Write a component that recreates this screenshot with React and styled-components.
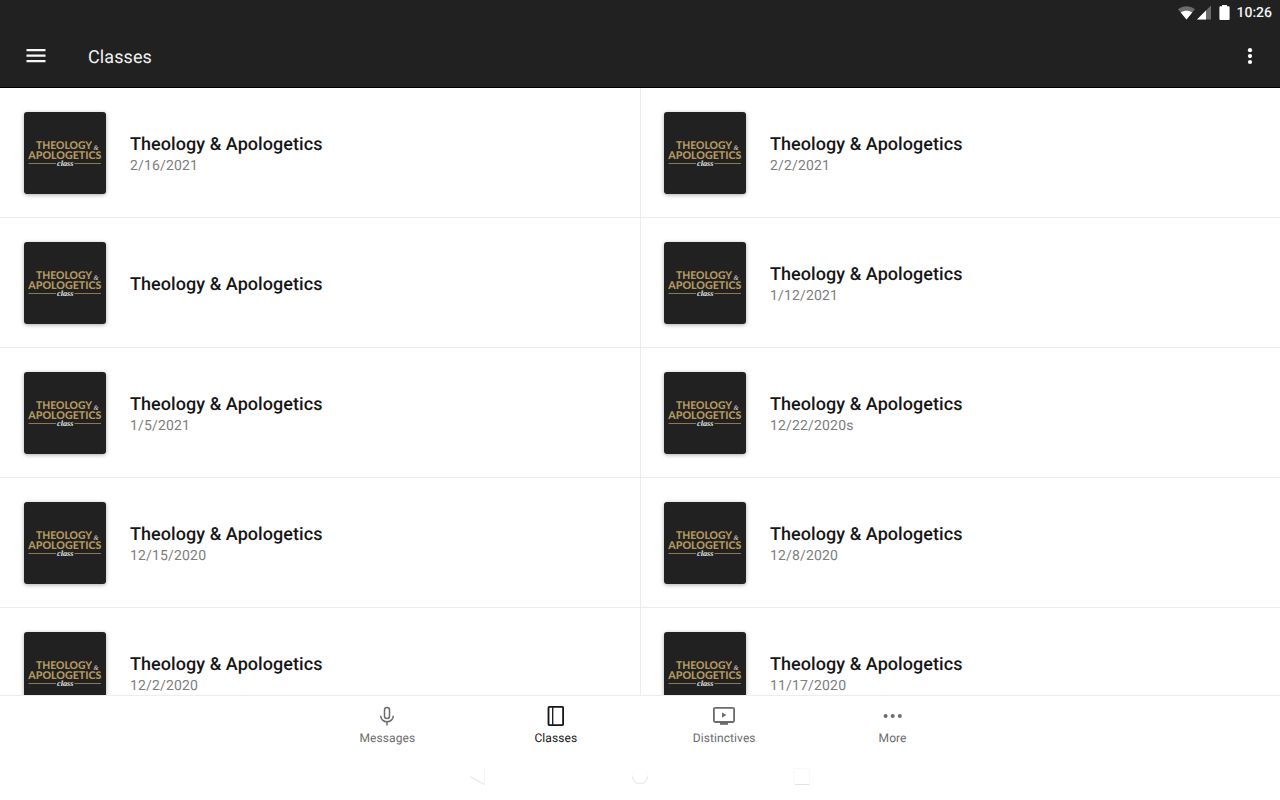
import React from "react";
import styled, { createGlobalStyle } from "styled-components";

const GlobalStyle = createGlobalStyle`
* {
  padding: 0;
  margin: 0;
  box-sizing: border-box;
}

body {
  background: #ffffff;
  color: #1c1c1c;
  font-family: Roboto, "Liberation Sans", sans-serif;
  text-rendering: geometricPrecision;
  overflow: hidden;
}
`;

const Screen = styled.div`
  display: flex;
  flex-direction: column;
  width: 1280px;
  height: 800px;
  background: #ffffff;
`;

const Header = styled.header`
  flex: none;
  height: 88px;
  background: #212121;
  border-bottom: 1px solid #000000;
`;

const StatusBar = styled.div`
  display: flex;
  justify-content: flex-end;
  align-items: center;
  height: 25px;
  padding-right: 8px;
`;

const Clock = styled.span`
  margin-left: 5px;
  padding-top: 1px;
  font-size: 14px;
  font-weight: 500;
  line-height: 16px;
  color: #f4f4f4;
`;

const Toolbar = styled.div`
  display: flex;
  align-items: center;
  height: 62px;
  padding: 0 18px 0 24px;
`;

const PageTitle = styled.h1`
  flex: 1;
  margin-left: 40px;
  padding-top: 4px;
  font-size: 18px;
  font-weight: 400;
  line-height: 24px;
  letter-spacing: 0.1px;
  color: #f2f2f2;
`;

const ClassGrid = styled.main`
  flex: none;
  display: grid;
  grid-template-columns: 640px 640px;
  grid-auto-rows: 130px;
  height: 607px;
  overflow: hidden;
`;

const StyledClassItem = styled.article`
  display: flex;
  align-items: flex-start;
  padding: 24px 24px 0;
  border-bottom: 1px solid #ececec;

  &:nth-child(even) {
    padding-left: 23px;
    border-left: 1px solid #ececec;
  }
`;

const CoverFrame = styled.div`
  flex: none;
  width: 82px;
  height: 82px;
  background: #212121;
  border-radius: 3px;
  box-shadow: 0 1px 4px rgba(0, 0, 0, 0.32);

  svg {
    display: block;
  }
`;

const ClassText = styled.div`
  display: flex;
  flex-direction: column;
  justify-content: center;
  height: 86px;
  margin-left: 24px;
`;

const ClassTitle = styled.h2`
  font-size: 18px;
  font-weight: 500;
  line-height: 22px;
  letter-spacing: 0.06px;
  white-space: nowrap;
  color: #161616;
`;

const ClassDate = styled.time`
  font-size: 14px;
  line-height: 20px;
  letter-spacing: 0.17px;
  color: #7d7d7d;
`;

const BottomNav = styled.nav`
  flex: none;
  display: flex;
  justify-content: center;
  height: 61px;
  padding-top: 8px;
  border-top: 1px solid #ededed;
`;

const StyledTab = styled.div`
  display: flex;
  flex-direction: column;
  align-items: center;
  width: 168.4px;
  color: ${(props) => (props.$active ? "#161616" : "#6c6c6c")};

  svg {
    display: block;
  }
`;

const TabLabel = styled.span`
  margin-top: 2px;
  font-size: 12px;
  line-height: 16px;
  letter-spacing: 0.08px;
`;

const SystemBar = styled.div`
  flex: none;
  display: flex;
  justify-content: center;
  gap: 138px;
  height: 44px;
  padding-top: 9px;
`;

const StatusIcons = () => (
  <svg width="54" height="18" viewBox="0 0 54 18">
    <path d="M9.5 15.5 1 5.2C6 1.2 13 1.2 18 5.2Z" fill="#6b6b6b" />
    <path d="M9.5 15.5 3.8 8.6C7 6 12 6 15.2 8.6Z" fill="#ffffff" />
    <path d="M20 15.5H34V1.5Z" fill="#6b6b6b" />
    <path d="M20 15.5H29V6.5Z" fill="#ffffff" />
    <path d="M45 1h5v1.3h1.6a1 1 0 0 1 1 1v11.7a1 1 0 0 1-1 1h-8.2a1 1 0 0 1-1-1V3.3a1 1 0 0 1 1-1H45Z" fill="#ffffff" />
  </svg>
);

const MenuIcon = () => (
  <svg width="24" height="24" viewBox="0 0 24 24">
    <path d="M2.5 6.1h19M2.5 11.6h19M2.5 17.1h19" stroke="#f7f7f7" strokeWidth="2.2" />
  </svg>
);

const OverflowIcon = () => (
  <svg width="24" height="24" viewBox="0 0 24 24" fill="#ffffff">
    <circle cx="12" cy="6.2" r="2.1" />
    <circle cx="12" cy="12.1" r="2.1" />
    <circle cx="12" cy="18" r="2.1" />
  </svg>
);

const Cover = () => (
  <CoverFrame>
    <svg width="82" height="82" viewBox="0 0 82 82">
      <g fill="#b3985f" fontFamily="Lato, sans-serif" fontWeight="900">
        <text x="12" y="37.4" fontSize="10.6" textLength="56" lengthAdjust="spacingAndGlyphs">
          THEOLOGY
        </text>
        <text x="4.3" y="47.2" fontSize="10.6" textLength="73" lengthAdjust="spacingAndGlyphs">
          APOLOGETICS
        </text>
      </g>
      <g fill="#e4e4e4" fontFamily="'Liberation Serif', serif" fontStyle="italic">
        <text x="69.4" y="37.6" fontSize="7" textLength="5" lengthAdjust="spacingAndGlyphs">
          &amp;
        </text>
        <text x="33" y="54" fontSize="8" fontWeight="700" textLength="16.5" lengthAdjust="spacingAndGlyphs">
          class
        </text>
      </g>
      <path d="M4.5 51.5H32M50.5 51.5H77" stroke="#8d784f" />
    </svg>
  </CoverFrame>
);

const MicIcon = () => (
  <svg width="24" height="24" viewBox="0 0 24 24" fill="none" stroke="currentColor" strokeWidth="1.5">
    <rect x="9.5" y="3.6" width="5" height="11" rx="2.5" />
    <path d="M5.7 11.8c0 3.5 2.8 6 6.3 6s6.3-2.5 6.3-6M12 17.8v3.7" />
  </svg>
);

const BookIcon = () => (
  <svg width="24" height="24" viewBox="0 0 24 24" fill="none" stroke="currentColor" strokeWidth="1.8">
    <rect x="4.5" y="2.9" width="14.6" height="18.2" rx="0.8" />
    <path d="M8.7 3v18" strokeWidth="1.3" />
  </svg>
);

const VideoIcon = () => (
  <svg width="24" height="24" viewBox="0 0 24 24" fill="none" stroke="currentColor">
    <rect x="1.9" y="3.9" width="20.2" height="14.1" rx="1.2" strokeWidth="1.8" />
    <path d="M8 19.8h8" strokeWidth="2" />
    <path d="M10 8.5v5.2l4.4-2.6Z" fill="currentColor" stroke="none" />
  </svg>
);

const MoreIcon = () => (
  <svg width="24" height="24" viewBox="0 0 24 24" fill="currentColor">
    <circle cx="4.6" cy="12" r="2" />
    <circle cx="11.7" cy="12" r="2" />
    <circle cx="18.8" cy="12" r="2" />
  </svg>
);

const SystemButtons = () => (
  <SystemBar>
    <svg width="24" height="24" viewBox="0 0 24 24" fill="none">
      <path d="M18.5 3v16.5" stroke="#f5f5f5" />
      <path d="M4 11.5 18.5 19.5" stroke="#e2e2e2" />
    </svg>
    <svg width="24" height="24" viewBox="0 0 24 24" fill="none">
      <circle cx="12" cy="10.5" r="7.5" stroke="#fcfcfc" />
      <path d="M4.5 12c1.3 9 13.7 9 15 0" stroke="#e4e4e4" />
    </svg>
    <svg width="24" height="24" viewBox="0 0 24 24" fill="none">
      <path d="M4.5 19V3.5h15V19" stroke="#f9f9f9" />
      <path d="M5 19.5h14.5" stroke="#e2e2e2" />
    </svg>
  </SystemBar>
);

const ClassItem = ({ date }) => (
  <StyledClassItem>
    <Cover />
    <ClassText>
      <ClassTitle>Theology &amp; Apologetics</ClassTitle>
      {date && <ClassDate>{date}</ClassDate>}
    </ClassText>
  </StyledClassItem>
);

const App = () => {
  const dates = [
    "2/16/2021",
    "2/2/2021",
    "",
    "1/12/2021",
    "1/5/2021",
    "12/22/2020s",
    "12/15/2020",
    "12/8/2020",
    "12/2/2020",
    "11/17/2020",
  ];

  const tabs = [
    { label: "Messages", Icon: MicIcon },
    { label: "Classes", Icon: BookIcon, active: true },
    { label: "Distinctives", Icon: VideoIcon },
    { label: "More", Icon: MoreIcon },
  ];

  return (
    <>
      <GlobalStyle />
      <Screen>
        <Header>
          <StatusBar>
            <StatusIcons />
            <Clock>10:26</Clock>
          </StatusBar>
          <Toolbar>
            <MenuIcon />
            <PageTitle>Classes</PageTitle>
            <OverflowIcon />
          </Toolbar>
        </Header>
        <ClassGrid>
          {dates.map((date, index) => (
            <ClassItem key={index} date={date} />
          ))}
        </ClassGrid>
        <BottomNav>
          {tabs.map(({ label, Icon, active }) => (
            <StyledTab key={label} $active={active}>
              <Icon />
              <TabLabel>{label}</TabLabel>
            </StyledTab>
          ))}
        </BottomNav>
        <SystemButtons />
      </Screen>
    </>
  );
};

export default App;
